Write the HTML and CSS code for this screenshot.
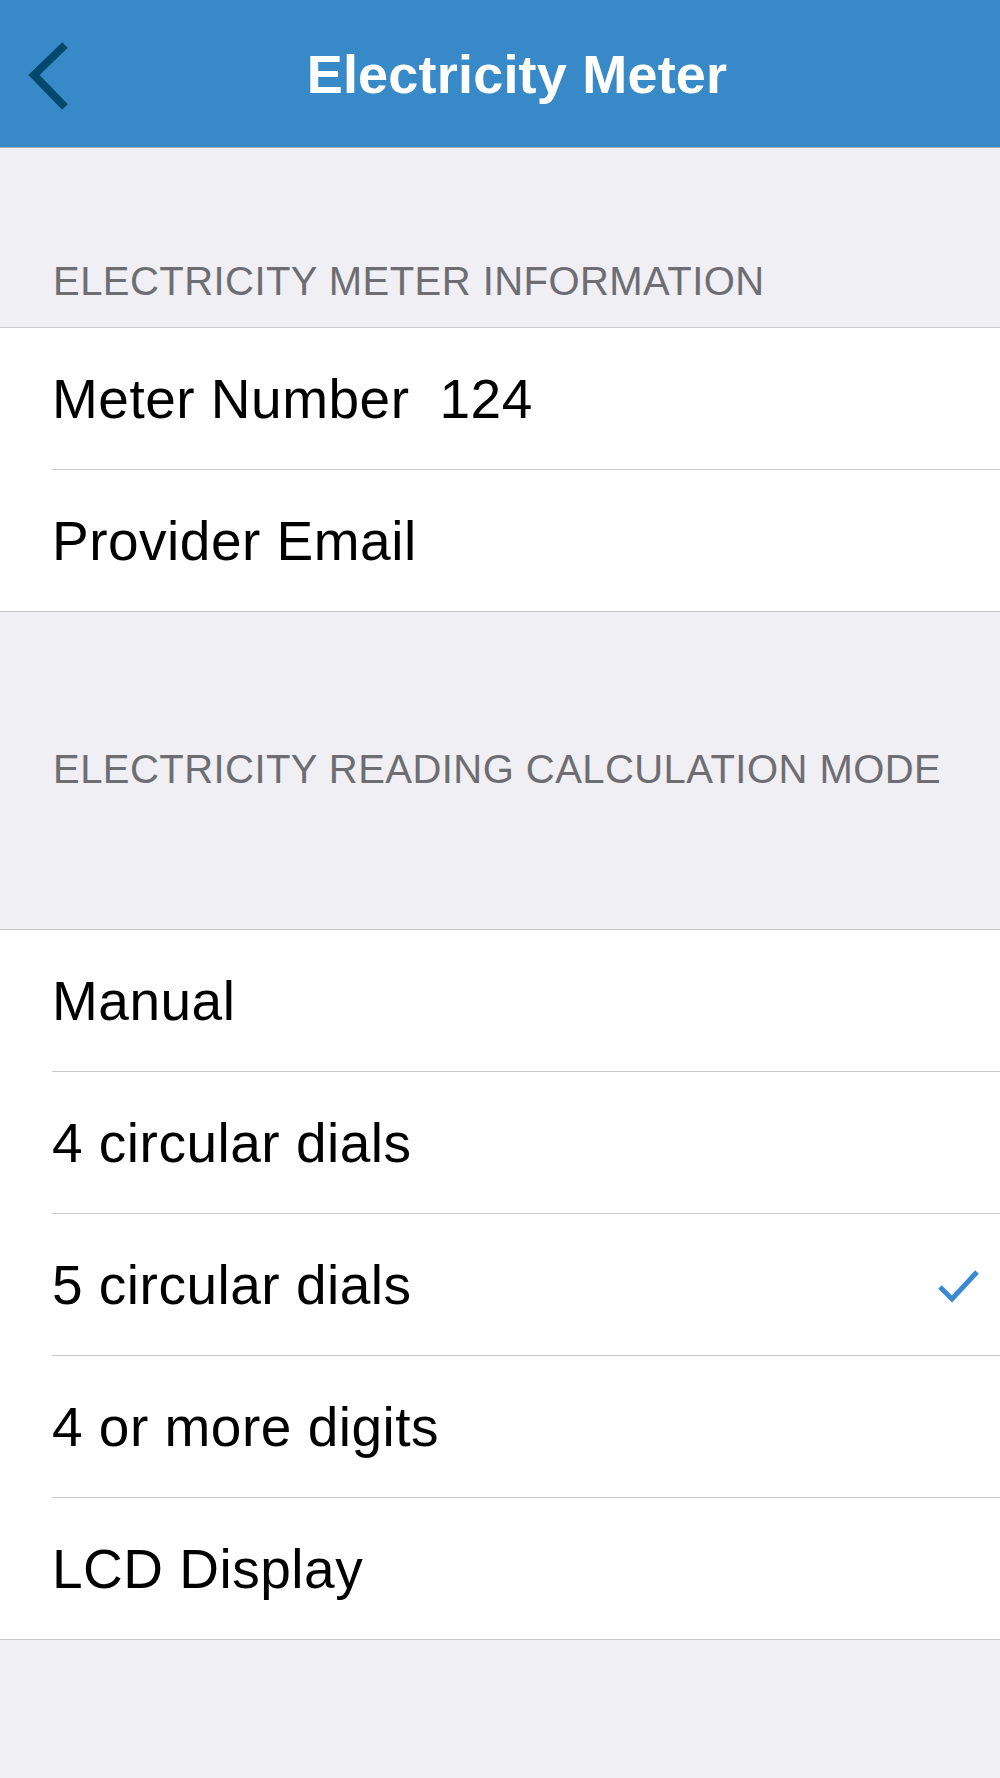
FILE: index.html
```html
<!DOCTYPE html>
<html lang="en">
<head>
<meta charset="utf-8">
<title>Electricity Meter</title>
<link rel="stylesheet" href="styles.css">
</head>
<body>
<header class="navbar">
  <div class="nav-left">
    <svg class="back-icon" width="60" height="80" viewBox="0 0 60 80" aria-hidden="true">
      <polyline points="45,10 14,40 45,72" fill="none" stroke="#00496c" stroke-width="8" stroke-linejoin="miter" stroke-linecap="butt"/>
    </svg>
  </div>
  <h1 class="nav-title">Electricity Meter</h1>
  <div class="nav-right"></div>
</header>

<main>
  <div class="section-header first">ELECTRICITY METER INFORMATION</div>
  <ul class="group">
    <li class="row"><span class="row-label">Meter Number</span><span class="row-value">124</span></li>
    <li class="row"><span class="row-label">Provider Email</span></li>
  </ul>

  <div class="section-header second">ELECTRICITY READING CALCULATION MODE</div>
  <ul class="group">
    <li class="row"><span class="row-label">Manual</span></li>
    <li class="row"><span class="row-label">4 circular dials</span></li>
    <li class="row selected"><span class="row-label">5 circular dials</span>
      <svg class="check" width="46" height="38" viewBox="0 0 46 38" aria-hidden="true">
        <polyline points="4,21 16,33 41,6" fill="none" stroke="#3a8ad3" stroke-width="5" stroke-linejoin="miter"/>
      </svg>
    </li>
    <li class="row"><span class="row-label">4 or more digits</span></li>
    <li class="row"><span class="row-label">LCD Display</span></li>
  </ul>
</main>
</body>
</html>
```
FILE: styles.css
```css
* {
  box-sizing: border-box;
}

html, body {
  margin: 0;
  padding: 0;
}

body {
  background: #efeff4;
  font-family: "Liberation Sans", Arial, sans-serif;
  color: #000;
  min-height: 1778px;
}

.navbar {
  height: 148px;
  background: #3889c8;
  border-bottom: 1px solid #a9adb3;
  display: grid;
  grid-template-columns: 1fr auto 1fr;
  align-items: start;
}

.nav-left {
  display: flex;
}

.back-icon {
  display: block;
  margin-left: 20px;
  margin-top: 35px;
}

.nav-title {
  margin: 0;
  margin-left: 34px;
  padding-top: 43px;
  font-size: 54px;
  line-height: 62px;
  font-weight: bold;
  letter-spacing: 0.2px;
  color: #fff;
  white-space: nowrap;
}

.section-header {
  font-size: 40px;
  line-height: 46px;
  letter-spacing: 0.45px;
  color: #6d6d72;
  padding-left: 53px;
  white-space: nowrap;
}

.section-header.first {
  padding-top: 110px;
  padding-bottom: 23px;
}

.section-header.second {
  padding-top: 134px;
  padding-bottom: 137px;
}

.group {
  list-style: none;
  margin: 0;
  padding: 0;
  background: #fff;
  border-top: 1px solid #c8c7cc;
  border-bottom: 1px solid #c8c7cc;
}

.row {
  margin-left: 52px;
  height: 142px;
  border-bottom: 1px solid #c8c7cc;
  display: flex;
  align-items: center;
  padding-right: 18px;
  font-size: 55px;
  letter-spacing: 0.5px;
}

.row:last-child {
  height: 141px;
  border-bottom: none;
}

.row-value {
  margin-left: 30px;
}

.check {
  display: block;
  margin-left: auto;
}
```
